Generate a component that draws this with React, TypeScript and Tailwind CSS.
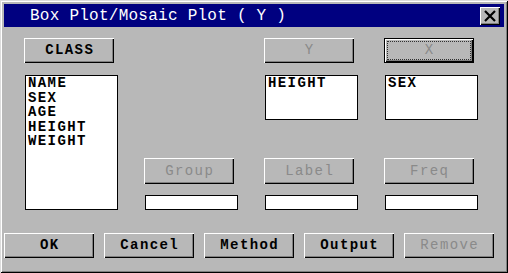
import React from "react";

const mono = { fontFamily: '"Liberation Mono", "DejaVu Sans Mono", monospace' };

const Btn = ({
  label,
  disabled,
  focused,
  className = "",
}: {
  label: string;
  disabled?: boolean;
  focused?: boolean;
  className?: string;
}) => {
  const text = (
    <span
      style={mono}
      className={`pl-[1.4px] text-[14px] tracking-[1.4px] ${disabled ? "text-[#8a8a8a]" : "font-bold text-black"}`}
    >
      {label}
    </span>
  );
  if (focused) {
    return (
      <div className={`border border-black ${className}`}>
        <div className="h-full w-full bg-[#b8b8b8] p-[2px] shadow-[inset_1px_1px_#fff,inset_-1px_-1px_#000,inset_-2px_-2px_#808080]">
          <div className="flex h-full w-full items-center justify-center border border-dotted border-[#303030]">
            {text}
          </div>
        </div>
      </div>
    );
  }
  return (
    <div
      className={`flex items-center justify-center bg-[#b8b8b8] shadow-[inset_1px_1px_#fff,inset_-1px_-1px_#000,inset_-2px_-2px_#808080] ${className}`}
    >
      {text}
    </div>
  );
};

const Field = ({ className = "" }: { className?: string }) => (
  <div className={`ml-px h-[15px] w-[93px] border border-black bg-white ${className}`} />
);

const VarBox = ({ items, className = "" }: { items: string[]; className?: string }) => (
  <div className={`ml-px w-[93px] border border-black bg-white pl-[2px] ${className}`}>
    {items.map((v) => (
      <div key={v} style={mono} className="text-[14px] font-bold leading-[14.6px] tracking-[1.4px] text-black">
        {v}
      </div>
    ))}
  </div>
);

export default function App() {
  return (
    <div className="h-[273px] w-[508px] bg-[#b8b8b8] shadow-[inset_1px_1px_#dcdcdc,inset_-1px_-1px_#000,inset_2px_2px_#fff,inset_-2px_-2px_#808080] p-[4px]">
      {/* title bar */}
      <div className="flex h-[23px] items-center justify-between bg-[#000080] pl-[26px] pr-[4px]">
        <span
          style={mono}
          className="pt-[1px] text-[16px] tracking-[0.25px] text-white"
        >
          Box Plot/Mosaic Plot ( Y )
        </span>
        <div className="flex h-[18px] w-[20px] items-center justify-center bg-[#b8b8b8] shadow-[inset_1px_1px_#fff,inset_-1px_-1px_#000,inset_-2px_-2px_#808080]">
          <svg width="12" height="12" viewBox="0 0 12 12">
            <path d="M1 1 L11 11 M11 1 L1 11" stroke="#000" strokeWidth="2.2" />
          </svg>
        </div>
      </div>

      {/* variable area */}
      <div className="flex gap-[30px] pl-[20px] pt-[11px]">
        <div className="flex w-[90px] flex-col">
          <Btn label="CLASS" className="h-[25px] w-[90px]" />
          <VarBox items={["NAME", "SEX", "AGE", "HEIGHT", "WEIGHT"]} className="mt-[12px] h-[135px]" />
        </div>
        <div className="flex w-[90px] flex-col pt-[120px]">
          <Btn label="Group" disabled className="h-[26px] w-[90px]" />
          <Field className="mt-[11px]" />
        </div>
        <div className="flex w-[90px] flex-col">
          <Btn label="Y" disabled className="h-[25px] w-[90px]" />
          <VarBox items={["HEIGHT"]} className="mt-[12px] h-[45px]" />
          <Btn label="Label" disabled className="mt-[38px] h-[26px] w-[90px]" />
          <Field className="mt-[11px]" />
        </div>
        <div className="flex w-[90px] flex-col">
          <Btn label="X" disabled focused className="h-[25px] w-[90px]" />
          <VarBox items={["SEX"]} className="mt-[12px] h-[45px]" />
          <Btn label="Freq" disabled className="mt-[38px] h-[26px] w-[90px]" />
          <Field className="mt-[11px]" />
        </div>
      </div>

      {/* bottom buttons */}
      <div className="mt-[23px] flex gap-[10px]">
        <Btn label="OK" className="h-[25px] w-[90px]" />
        <Btn label="Cancel" className="h-[25px] w-[90px]" />
        <Btn label="Method" className="h-[25px] w-[90px]" />
        <Btn label="Output" className="h-[25px] w-[90px]" />
        <Btn label="Remove" disabled className="h-[25px] w-[90px]" />
      </div>
    </div>
  );
}
